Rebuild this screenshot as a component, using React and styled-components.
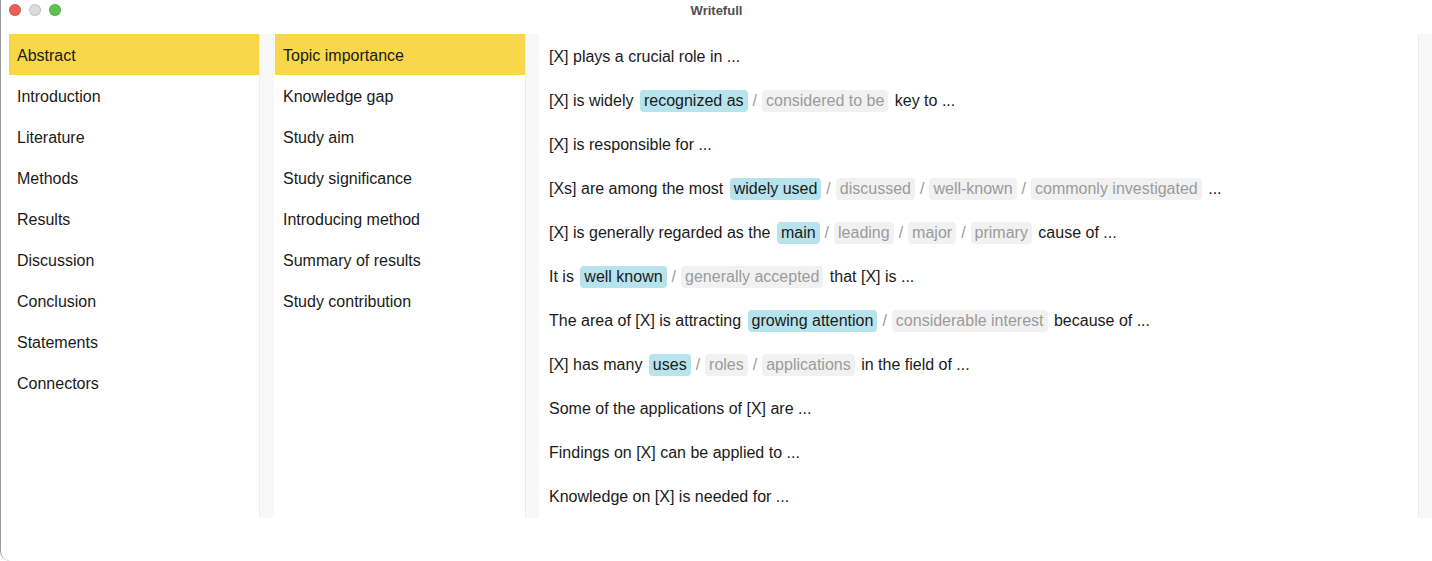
import React, { useState } from 'react'
import styled, { createGlobalStyle } from 'styled-components';

const GlobalStyle = createGlobalStyle`
  html, body {
    margin: 0;
    padding: 0;
    background: #ffffff;
    font-family: "Liberation Sans", Arial, sans-serif;
  }
`;

const Window = styled.div`
  width: 1432px;
  height: 561px;
  box-sizing: border-box;
  border-left: 1px solid #9a9a9a;
  border-bottom-left-radius: 10px;
  background: #fff;
  display: flex;
  flex-direction: column;
  overflow: hidden;
`;

const TitleBar = styled.div`
  height: 22px;
  flex: none;
  box-sizing: border-box;
  padding-bottom: 2px;
  display: flex;
  align-items: center;
  justify-content: center;
  position: relative;
  font-size: 13px;
  font-weight: bold;
  color: #505050;
`;

const Lights = styled.div`
  position: absolute;
  left: 8px;
  top: 4px;
  display: flex;
  gap: 8px;
`;

const Light = styled.span`
  width: 12px;
  height: 12px;
  border-radius: 50%;
  background: ${({ color }) => color};
  box-sizing: border-box;
  border: 0.5px solid rgba(0,0,0,0.12);
`;

const Body = styled.div`
  display: flex;
  margin: 12px 0 0 8px;
  height: 484px;
`;

const Column = styled.div`
  width: ${({ w }) => w}px;
  flex: none;
  display: flex;
  flex-direction: column;
  padding-left: ${({ pad }) => pad || 0}px;
`;

const Gutter = styled.div`
  width: ${({ w }) => w || 15}px;
  flex: none;
  background: #f8f8f8;
  border-left: 1px solid #ececec;
  box-sizing: border-box;
  margin-right: ${({ mr }) => mr || 0}px;
`;

const NavItem = styled.div`
  height: 41px;
  box-sizing: border-box;
  padding-top: 2px;
  display: flex;
  align-items: center;
  padding-left: 8px;
  font-size: 16px;
  color: #1a1a1a;
  background: ${({ active }) => (active ? '#f8d84a' : 'transparent')};
  cursor: pointer;
`;

const Phrase = styled.div`
  height: 44px;
  box-sizing: border-box;
  padding-top: 2px;
  display: flex;
  align-items: center;
  font-size: 16px;
  color: #1a1a1a;
  white-space: pre;
`;

const Chip = styled.span`
  display: inline-block;
  padding: 2px 4px;
  border-radius: 4px;
  line-height: 18px;
  background: ${({ main }) => (main ? '#b6e3ec' : '#f1f1f1')};
  color: ${({ main }) => (main ? '#1a1a1a' : '#9b9b9b')};
  margin: 0 2px;
`;

const Slash = styled.span`
  color: #9b9b9b;
  margin: 0 3px;
`;

const sections = ['Abstract', 'Introduction', 'Literature', 'Methods', 'Results', 'Discussion', 'Conclusion', 'Statements', 'Connectors'];
const topics = ['Topic importance', 'Knowledge gap', 'Study aim', 'Study significance', 'Introducing method', 'Summary of results', 'Study contribution'];

// each phrase: [before, options, after]
const phrases = [
  ['[X] plays a crucial role in ...'],
  ['[X] is widely ', ['recognized as', 'considered to be'], ' key to ...'],
  ['[X] is responsible for ...'],
  ['[Xs] are among the most ', ['widely used', 'discussed', 'well-known', 'commonly investigated'], ' ...'],
  ['[X] is generally regarded as the ', ['main', 'leading', 'major', 'primary'], ' cause of ...'],
  ['It is ', ['well known', 'generally accepted'], ' that [X] is ...'],
  ['The area of [X] is attracting ', ['growing attention', 'considerable interest'], ' because of ...'],
  ['[X] has many ', ['uses', 'roles', 'applications'], ' in the field of ...'],
  ['Some of the applications of [X] are ...'],
  ['Findings on [X] can be applied to ...'],
  ['Knowledge on [X] is needed for ...'],
];

function App () {
  const [section, setSection] = useState(0);
  const [topic, setTopic] = useState(0);

  return (
    <Window>
      <GlobalStyle />
      <TitleBar>
        <Lights>
          <Light color="#ee5f57" />
          <Light color="#dcdcdc" />
          <Light color="#5fc24f" />
        </Lights>
        Writefull
      </TitleBar>
      <Body>
        <Column w={250}>
          {sections.map((s, i) => (
            <NavItem key={s} active={i === section} onClick={() => setSection(i)}>{s}</NavItem>
          ))}
        </Column>
        <Gutter w={15} mr={1} />
        <Column w={250}>
          {topics.map((t, i) => (
            <NavItem key={t} active={i === topic} onClick={() => setTopic(i)}>{t}</NavItem>
          ))}
        </Column>
        <Gutter w={14} />
        <Column w={869} pad={10}>
          {phrases.map(([before, options, after], i) => (
            <Phrase key={i}>
              {before}
              {options && options.map((o, j) => (
                <React.Fragment key={o}>
                  {j > 0 && <Slash>/</Slash>}
                  <Chip main={j === 0}>{o}</Chip>
                </React.Fragment>
              ))}
              {after}
            </Phrase>
          ))}
        </Column>
        <Gutter w={14} />
      </Body>
    </Window>
  );
}

export default App
